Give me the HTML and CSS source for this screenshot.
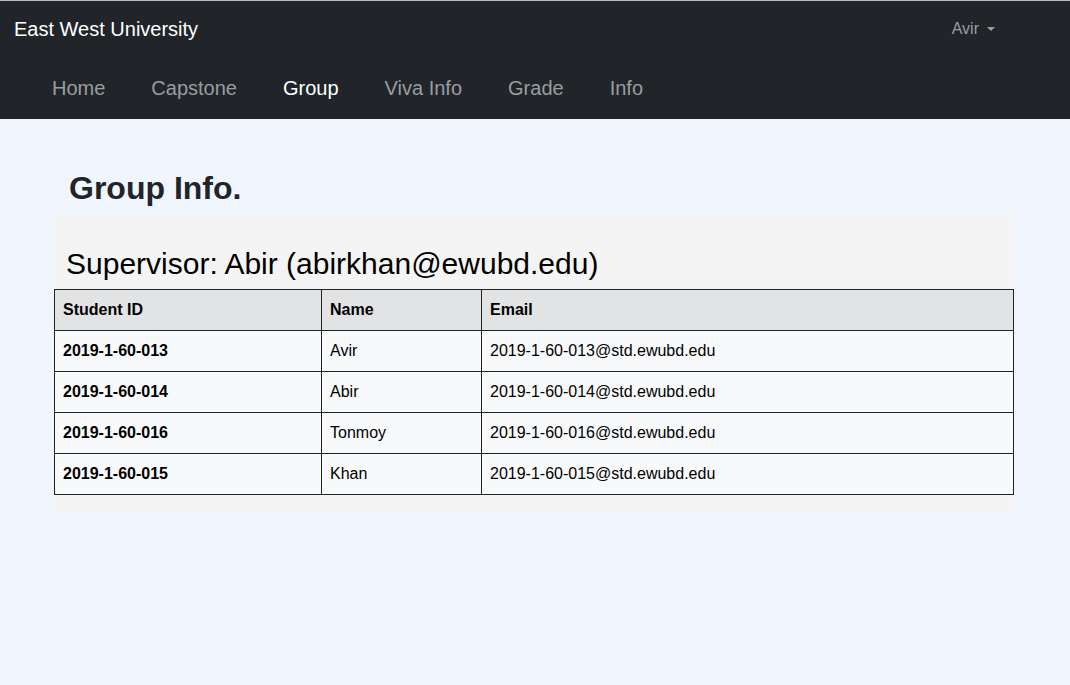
FILE: index.html
```html
<!DOCTYPE html>
<html lang="en">
<head>
<meta charset="utf-8">
<title>Group Info</title>
<link rel="stylesheet" href="styles.css">
</head>
<body>
<header class="navbar">
  <div class="topbar">
    <a class="brand" href="#">East West University</a>
    <div class="user">Avir <span class="caret"></span></div>
  </div>
  <nav class="navlinks">
    <a class="navlink" href="#">Home</a>
    <a class="navlink" href="#">Capstone</a>
    <a class="navlink active" href="#">Group</a>
    <a class="navlink" href="#">Viva Info</a>
    <a class="navlink" href="#">Grade</a>
    <a class="navlink" href="#">Info</a>
  </nav>
</header>
<main class="main">
  <h2 class="title">Group Info.</h2>
  <section class="card">
    <h3 class="supervisor">Supervisor: Abir (abirkhan@ewubd.edu)</h3>
    <table class="table">
      <thead>
        <tr><th class="c1">Student ID</th><th class="c2">Name</th><th>Email</th></tr>
      </thead>
      <tbody>
        <tr><th>2019-1-60-013</th><td>Avir</td><td>2019-1-60-013@std.ewubd.edu</td></tr>
        <tr><th>2019-1-60-014</th><td>Abir</td><td>2019-1-60-014@std.ewubd.edu</td></tr>
        <tr><th>2019-1-60-016</th><td>Tonmoy</td><td>2019-1-60-016@std.ewubd.edu</td></tr>
        <tr><th>2019-1-60-015</th><td>Khan</td><td>2019-1-60-015@std.ewubd.edu</td></tr>
      </tbody>
    </table>
  </section>
</main>
</body>
</html>
```

FILE: styles.css
```css
* { box-sizing: border-box; }
html, body { margin: 0; padding: 0; }
body {
  font-family: "Liberation Sans", Arial, sans-serif;
  background: #f1f6fe;
  color: #212529;
  min-height: 685px;
}
.navbar {
  background: #212529;
  border-top: 1px solid #b9bbbd;
}
.topbar {
  height: 57px;
  display: flex;
  align-items: center;
  padding: 0 75px 2px 14px;
}
.brand {
  color: #fff;
  text-decoration: none;
  font-size: 20px;
  line-height: 24px;
}
.user {
  margin-left: auto;
  color: #9a9da0;
  font-size: 16px;
  line-height: 24px;
  display: flex;
  align-items: center;
  margin-bottom: 0;
}
.caret {
  display: inline-block;
  margin-left: 8px;
  width: 0;
  height: 0;
  border-left: 4px solid transparent;
  border-right: 4px solid transparent;
  border-top: 4px solid #9a9da0;
}
.navlinks {
  height: 61px;
  display: flex;
  align-items: center;
  padding: 0 0 2px 29px;
}
.navlink {
  color: #9a9da0;
  text-decoration: none;
  font-size: 20px;
  line-height: 24px;
  padding: 0 23px;
}
.navlink.active { color: #fff; }
.main {
  padding: 50px 56px 0 54px;
}
.title {
  margin: 0 0 9px 15px;
  font-size: 32px;
  line-height: 38px;
  font-weight: bold;
  color: #212529;
}
.card {
  background: #f4f4f4;
  padding: 30px 0 17px 0;
}
.supervisor {
  margin: 0 0 7px 12px;
  font-size: 30px;
  line-height: 36px;
  font-weight: normal;
  color: #000;
}
.table {
  width: 100%;
  border-collapse: collapse;
  font-size: 16px;
  color: #000;
}
.table th, .table td {
  border: 1px solid #222;
  padding: 8px 8px;
  line-height: 24px;
  text-align: left;
  height: 41px;
}
.table thead th {
  background: #e2e3e5;
  font-weight: bold;
}
.table tbody th, .table tbody td {
  background: #f8f9fa;
}
.table tbody th { font-weight: bold; }
.table td { font-weight: normal; }
.c1 { width: 267px; }
.c2 { width: 160px; }
```
